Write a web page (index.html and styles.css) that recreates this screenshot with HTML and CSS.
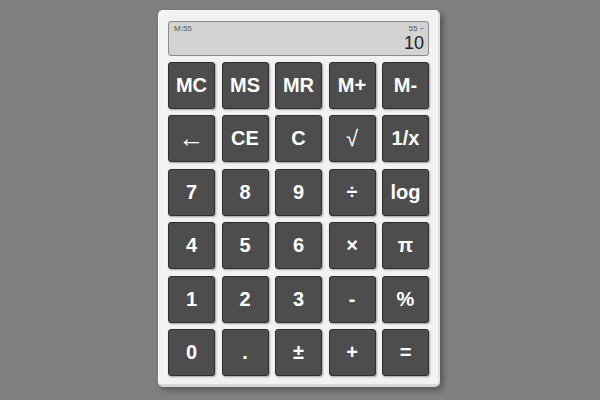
FILE: index.html
```html
<!DOCTYPE html>
<html>
<head>
<meta charset="utf-8">
<link rel="stylesheet" href="styles.css">
</head>
<body>
<div class="calc">
  <div class="display">
    <div class="top-line">
      <span class="mem">M:55</span>
      <span class="pending">55 ÷</span>
    </div>
    <div class="value">10</div>
  </div>
  <div class="keys">
    <button class="key">MC</button>
    <button class="key">MS</button>
    <button class="key">MR</button>
    <button class="key">M+</button>
    <button class="key">M-</button>
    <button class="key key-thin key-arrow">←</button>
    <button class="key">CE</button>
    <button class="key">C</button>
    <button class="key key-thin key-root">√</button>
    <button class="key">1/x</button>
    <button class="key">7</button>
    <button class="key">8</button>
    <button class="key">9</button>
    <button class="key">÷</button>
    <button class="key">log</button>
    <button class="key">4</button>
    <button class="key">5</button>
    <button class="key">6</button>
    <button class="key">×</button>
    <button class="key">π</button>
    <button class="key">1</button>
    <button class="key">2</button>
    <button class="key">3</button>
    <button class="key">-</button>
    <button class="key">%</button>
    <button class="key">0</button>
    <button class="key">.</button>
    <button class="key">±</button>
    <button class="key">+</button>
    <button class="key">=</button>
  </div>
</div>
</body>
</html>
```
FILE: styles.css
```css
html, body {
  margin: 0;
  padding: 0;
}
body {
  background: #808080;
  width: 600px;
  height: 400px;
  display: flex;
  justify-content: center;
  align-items: flex-start;
  font-family: "Liberation Sans", Arial, sans-serif;
}
.calc {
  box-sizing: border-box;
  margin-top: 10px;
  margin-left: -2px;
  width: 282px;
  height: 377px;
  padding: 10px 9px 8px 9px;
  background: #f2f2f2;
  border-radius: 5px;
  border-top: 1px solid #fafafa;
  border-left: 1px solid #fafafa;
  border-bottom: 3px solid #d8d8d8;
  border-right: 2px solid #e0e0e0;
  box-shadow: 3px 3px 6px rgba(0, 0, 0, 0.35);
  display: flex;
  flex-direction: column;
  gap: 6px;
}
.display {
  box-sizing: border-box;
  height: 35px;
  background: #d3d3d3;
  border: 1px solid #8a8a8a;
  border-radius: 3px;
  padding: 2px 4px 0 5px;
  display: flex;
  flex-direction: column;
}
.top-line {
  display: flex;
  justify-content: space-between;
  font-size: 8px;
  color: #555;
  line-height: 10px;
}
.value {
  text-align: right;
  font-size: 18px;
  line-height: 19px;
  color: #222;
}
.keys {
  flex: 1;
  display: grid;
  grid-template-columns: repeat(5, 1fr);
  grid-template-rows: repeat(6, 1fr);
  gap: 6.5px;
}
.key {
  box-sizing: border-box;
  margin: 0;
  padding: 0;
  background: #4d4d4d;
  border: 1px solid #2f2f2f;
  border-radius: 3px;
  box-shadow: 1px 1px 2px rgba(0, 0, 0, 0.35);
  color: #fff;
  font-family: "Liberation Sans", Arial, sans-serif;
  font-weight: bold;
  font-size: 20px;
  display: flex;
  align-items: center;
  justify-content: center;
}
.key-thin {
  font-weight: normal;
}
.key-arrow {
  font-size: 26px;
}
.key-root {
  font-size: 22px;
}
```
